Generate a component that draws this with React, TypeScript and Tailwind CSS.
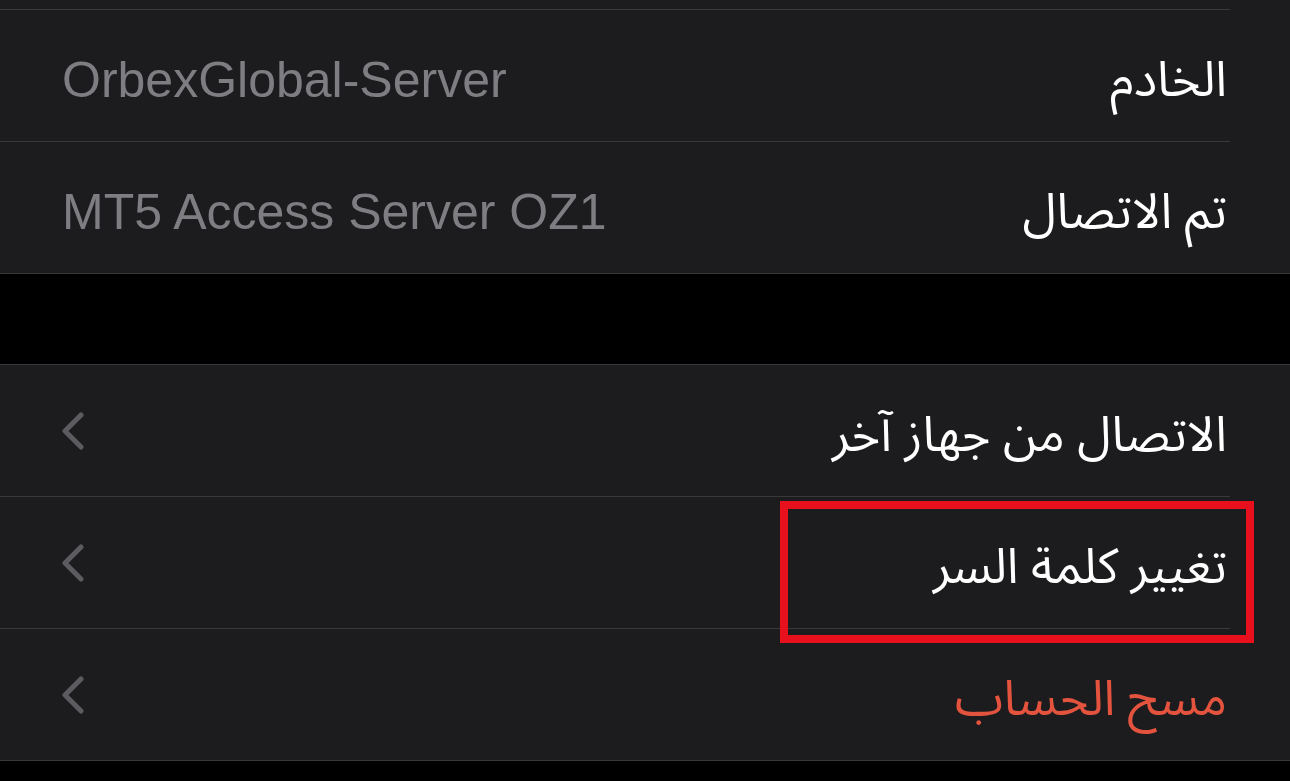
const arabic = "font-['Noto_Sans_Arabic','DejaVu_Sans',sans-serif]";

const Chevron = () => (
  <svg width="24" height="40" viewBox="0 0 24 40" className="shrink-0">
    <polyline
      points="19,4 3,20 19,36"
      fill="none"
      stroke="#5c5c60"
      strokeWidth="5"
      strokeLinecap="round"
      strokeLinejoin="round"
    />
  </svg>
);

type RowProps = {
  label: string;
  value?: string;
  chevron?: boolean;
  danger?: boolean;
  last?: boolean;
};

const Row = ({ label, value, chevron, danger, last }: RowProps) => (
  <>
    <div className="h-[131px] flex items-center justify-between pr-[63px] pl-[62px]">
      <span
        className={`${arabic} text-[49px] leading-none pt-[10px] ${danger ? "text-[#e4533e]" : "text-white"}`}
      >
        {label}
      </span>
      {value && (
        <span
          dir="ltr"
          className="font-['Liberation_Sans',Arial,sans-serif] text-[50px] leading-none pt-[8px] text-[#7e7e82]"
        >
          {value}
        </span>
      )}
      {chevron && <Chevron />}
    </div>
    <div className={`h-px bg-[#38383a] ${last ? "" : "mr-[60px]"}`} />
  </>
);

export default function App() {
  return (
    <div dir="rtl" className="relative w-[1290px] h-[781px] bg-black overflow-hidden">
      {/* account info group */}
      <section className="bg-[#1c1c1e]">
        <div className="h-[9px]" />
        <div className="h-px bg-[#38383a] mr-[60px]" />
        <Row label="الخادم" value="OrbexGlobal-Server" />
        <Row label="تم الاتصال" value="MT5 Access Server OZ1" last />
      </section>

      <div className="h-[90px]" />

      {/* actions group */}
      <section className="bg-[#1c1c1e]">
        <div className="h-px bg-[#38383a]" />
        <Row label="الاتصال من جهاز آخر" chevron />
        <Row label="تغيير كلمة السر" chevron />
        <Row label="مسح الحساب" chevron danger last />
      </section>

      {/* highlight annotation */}
      <div className="absolute left-[780px] top-[501px] w-[474px] h-[142px] border-[8px] border-[#e8101d]" />
    </div>
  );
}
